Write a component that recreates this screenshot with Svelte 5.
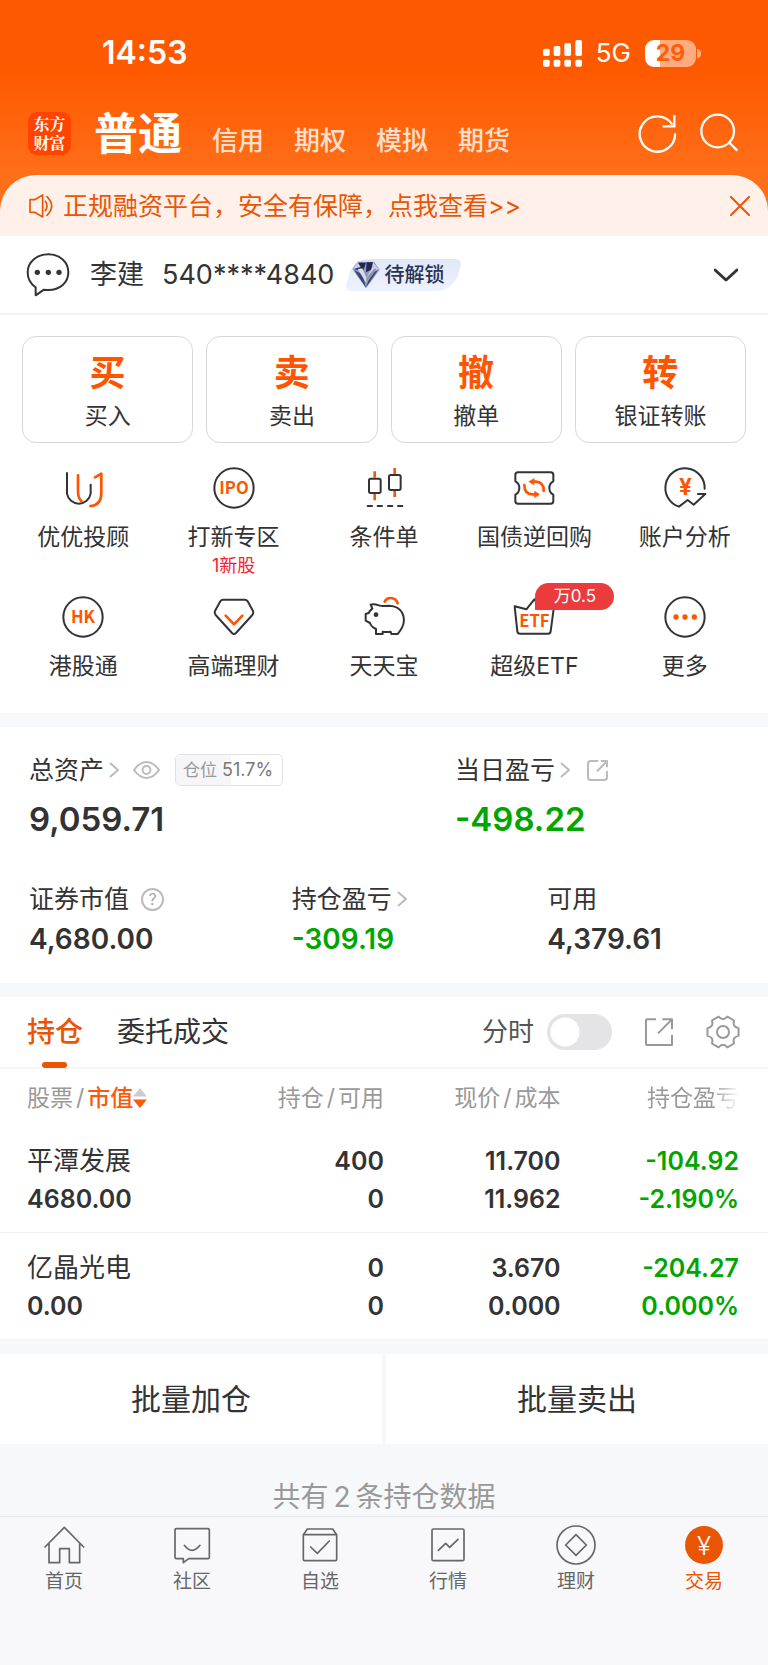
<script>
  const accountTabs = ['信用', '期权', '模拟', '期货'];
  const actions = [
    { glyph: '买', label: '买入' },
    { glyph: '卖', label: '卖出' },
    { glyph: '撤', label: '撤单' },
    { glyph: '转', label: '银证转账' }
  ];
  const tools = [
    { id: 'advisor', label: '优优投顾' },
    { id: 'ipo', label: '打新专区', note: '1新股' },
    { id: 'condition', label: '条件单' },
    { id: 'repo', label: '国债逆回购' },
    { id: 'analysis', label: '账户分析' },
    { id: 'hk', label: '港股通' },
    { id: 'wealth', label: '高端理财' },
    { id: 'piggy', label: '天天宝' },
    { id: 'etf', label: '超级ETF', badge: '万0.5' },
    { id: 'more', label: '更多' }
  ];
  const holdings = [
    { name: '平潭发展', value: '4680.00', held: '400', free: '0', price: '11.700', cost: '11.962', gain: '-104.92', rate: '-2.190%' },
    { name: '亿晶光电', value: '0.00', held: '0', free: '0', price: '3.670', cost: '0.000', gain: '-204.27', rate: '0.000%' }
  ];
  const navItems = [
    { id: 'home', label: '首页' },
    { id: 'community', label: '社区' },
    { id: 'watch', label: '自选' },
    { id: 'market', label: '行情' },
    { id: 'finance', label: '理财' },
    { id: 'trade', label: '交易', active: true }
  ];
  const position = 51.7;
  let intraday = $state(false);

  // Six-lobed gear outline: flat lobe tips joined by concave curves.
  function gearPath() {
    const pt = (deg, r) => {
      const a = (deg * Math.PI) / 180;
      return `${(Math.cos(a) * r).toFixed(1)},${(Math.sin(a) * r).toFixed(1)}`;
    };
    let d = `M${pt(-14, 48)}`;
    for (let k = 0; k < 6; k++) {
      d += ` L${pt(k * 60 + 14, 48)} Q${pt(k * 60 + 30, 31)} ${pt(k * 60 + 46, 48)}`;
    }
    return d + 'Z';
  }
  const gear = gearPath();
</script>

{#snippet chevron()}
  <svg class="chev" viewBox="0 0 10 16" aria-hidden="true"><path d="M1 1l8 7-8 7" /></svg>
{/snippet}

{#snippet toolIcon(id)}
  <svg class="tool-icon" viewBox="-66 -66 132 132" aria-hidden="true">
    {#if id === 'advisor'}
      <path d="M-48-45V17A36 36 0 0 0 23 17V-10" />
      <path class="o" d="M-15-38V10Q-15 32-4 40M36-32L55-43V14Q55 52 22 54" />
    {:else if id === 'ipo'}
      <circle r="59" /><text x="0" y="18">IPO</text>
    {:else if id === 'condition'}
      <rect x="-45" y="-28" width="35" height="43" rx="5" />
      <rect x="15" y="-39" width="35" height="45" rx="5" />
      <path d="M-49 54h13M-19 54h13M12 54h13M42 54h13" />
      <path class="o butt" d="M-28-50v19M-28 18v19M32-60v18M32 9v18" />
    {:else if id === 'repo'}
      <path d="M-48-47H50Q58-47 58-39V-20Q46-14 46 0T58 20V39Q58 47 50 47H-48Q-56 47-56 39V20Q-44 14-44 0T-56-20V-39Q-56-47-48-47Z" />
      <path class="o" d="M-4-19H6Q30-17 29 9M-29-9Q-29 19-4 19H6" />
      <path class="of" d="M-17-19L1-30V-8ZM18 19L1 8V31Z" />
    {:else if id === 'analysis'}
      <path d="M59 2A59 59 0 1 0-18 56L8 36 26 50 61 18H39" />
      <text class="yen" x="1" y="21">¥</text>
    {:else if id === 'hk'}
      <circle r="59" /><text x="0" y="19">HK</text>
    {:else if id === 'wealth'}
      <path d="M-32-52H32Q38-52 41-47L57-18Q60-12 55-6L6 48Q0 54-6 48L-55-6Q-60-12-57-18L-41-47Q-38-52-32-52Z" />
      <path class="o" d="M-25-4L0 22 25-4" />
    {:else if id === 'piggy'}
      <path d="M-40-37Q-30-40-15-35Q-8-32 0-33L16-34Q44-33 55-12Q65 10 54 32Q49 42 41 51H22L20 44Q9 46-4 44V51H-24V36Q-38 30-42 18L-55 11V-9L-46-12Q-42-20-35-25Z" />
      <path class="o" d="M2-46Q8-58 20-57Q37-56 41-41" />
      <circle class="dot" cx="-24" cy="-7" r="7" />
    {:else if id === 'etf'}
      <path d="M-58-32L-23-23 1-53 24-23 60-32 50 43Q49 50 42 50H-42Q-49 50-50 43Z" />
      <text x="1" y="31">ETF</text>
    {:else}
      <circle r="59" />
      <path class="of" d="M-35 0a8 8 0 1 0 16 0a8 8 0 1 0-16 0M-8 0a8 8 0 1 0 16 0a8 8 0 1 0-16 0M20 0a8 8 0 1 0 16 0a8 8 0 1 0-16 0" />
    {/if}
  </svg>
{/snippet}

{#snippet navIcon(id)}
  <svg class="nav-icon" viewBox="-63 -63 126 126" aria-hidden="true">
    {#if id === 'home'}
      <path d="M-57 6L1-53 59 6M-45-4V53H-13V11H16V53H47V-4" />
    {:else if id === 'community'}
      <path d="M-47-49H48Q52-49 52-45V37Q52 41 48 41H-10L-26 53V41H-47Q-51 41-51 37V-45Q-51-49-47-49ZM-23 1Q0 31 24 1" />
    {:else if id === 'watch'}
      <path d="M-50-31L-38-48H38L50-31V43Q50 47 46 47H-46Q-50 47-50 43ZM-50-31H50M-28 6L-8 25 28-12" />
    {:else if id === 'market'}
      <rect x="-48" y="-48" width="96" height="95" rx="4" />
      <path d="M-29 16L-7-5 5 7 30-17" />
    {:else if id === 'finance'}
      <circle r="57" /><path d="M0-31L31 0 0 31-31 0Z" />
    {:else}
      <circle class="coin" r="57" /><text x="0" y="29">¥</text>
    {/if}
  </svg>
{/snippet}

<div class="page">
  <header class="top">
    <div class="status">
      <span class="time">14:53</span>
      <div class="status-right">
        <svg class="signal" viewBox="0 0 117 81" aria-label="信号">
          <rect y="26" width="20" height="22" rx="5" /><rect x="32" y="18" width="20" height="30" rx="5" />
          <rect x="64" y="9" width="20" height="39" rx="5" /><rect x="97" width="20" height="48" rx="5" />
          <rect y="59" width="20" height="21" rx="5" /><rect x="32" y="59" width="20" height="21" rx="5" />
          <rect x="64" y="59" width="20" height="21" rx="5" /><rect x="97" y="59" width="20" height="21" rx="5" />
        </svg>
        <span class="net">5G</span>
        <div class="battery"><span class="cell">29</span><i></i></div>
      </div>
    </div>
    <div class="title-row">
      <div class="logo">东方财富</div>
      <nav class="account-tabs">
        <a class="current" href="#main">普通</a>
        {#each accountTabs as tab}<a href="#{tab}">{tab}</a>{/each}
      </nav>
      <div class="top-tools">
        <button aria-label="刷新">
          <svg viewBox="-63 -63 126 126"><path d="M54 1A53 53 0 1 1 46-25M52-53V-20H17" /></svg>
        </button>
        <button aria-label="搜索">
          <svg viewBox="-63 -63 126 126"><circle cx="-4" cy="-6" r="49" /><path d="M32 30L55 53" /></svg>
        </button>
      </div>
    </div>
    <div class="notice">
      <svg class="speaker" viewBox="0 0 72 72" aria-hidden="true">
        <path d="M3 17H17L41 3V69L17 55H3ZM49 22Q59 36 49 50M54 8Q82 36 54 64" />
      </svg>
      <a href="#notice">正规融资平台，安全有保障，点我查看&gt;&gt;</a>
      <button aria-label="关闭"><svg viewBox="0 0 20 20"><path d="M1 1L19 19M19 1L1 19" /></svg></button>
    </div>
  </header>

  <main>
    <section class="account">
      <svg class="chat" viewBox="0 0 132 132" aria-hidden="true">
        <path d="M29 103V127L54 110Q60 111 67 111C102 111 127 89 127 58S102 4 67 4 5 27 5 58C5 77 14 93 29 103Z" />
        <circle cx="34" cy="58" r="8" /><circle cx="67" cy="58" r="8" /><circle cx="99" cy="58" r="8" />
      </svg>
      <span class="name">李建</span>
      <span class="number">540****4840</span>
      <span class="level">
        <svg viewBox="0 0 84 84" aria-hidden="true">
          <path fill="#8c95c4" d="M17 2H66L83 26 42 82 1 24Z" />
          <path fill="#20264f" d="M20 5H42L33 30 6 24ZM44 4H63L57 26 42 34Z" />
          <path fill="#c6cdec" d="M63 4L81 26 60 26ZM17 4L26 18 3 25Z" />
          <path fill="#3c4475" d="M7 28L42 80 31 40ZM77 28L43 78 54 40Z" />
          <path fill="#dadde6" d="M17 24L31 22 43 50 60 22 73 24 43 66Z" />
          <path fill="#8f94a6" d="M43 50V66L73 24 66 23Z" />
        </svg>
        待解锁
      </span>
      <button aria-label="切换账户"><svg viewBox="0 0 24 14"><path d="M1 2L12 12 23 2" /></svg></button>
    </section>

    <section class="trade">
      <div class="actions">
        {#each actions as a}
          <button><b>{a.glyph}</b><span>{a.label}</span></button>
        {/each}
      </div>
      <div class="tools">
        {#each tools as t}
          <a href="#{t.id}">
            <span class="icon-wrap">
              {@render toolIcon(t.id)}
              {#if t.badge}<em>{t.badge}</em>{/if}
            </span>
            <span class="tool-label">{t.label}</span>
            {#if t.note}<small>{t.note}</small>{/if}
          </a>
        {/each}
      </div>
    </section>

    <section class="assets">
      <div class="major">
        <div>
          <div class="label">
            总资产 {@render chevron()}
            <button class="eye" aria-label="隐藏金额">
              <svg viewBox="0 0 82 54"><path d="M3 27Q20 3 41 3T79 27Q62 51 41 51T3 27Z" /><circle cx="41" cy="27" r="12" /></svg>
            </button>
            <span class="position"><i style="width: {position}%"></i><span>仓位</span><span class="pct">{position}%</span></span>
          </div>
          <div class="big">9,059.71</div>
        </div>
        <div>
          <div class="label">
            当日盈亏 {@render chevron()}
            <button class="share-s" aria-label="分享">
              <svg viewBox="-31 -31 62 62"><path d="M0-28H-20Q-28-28-28-20V20Q-28 28-20 28H20Q28 28 28 20V4M0 1L27-26M12-28H28V-12" /></svg>
            </button>
          </div>
          <div class="big down">-498.22</div>
        </div>
      </div>
      <div class="minor">
        <div>
          <div class="label">
            证券市值
            <button class="help" aria-label="说明">?</button>
          </div>
          <div class="mid">4,680.00</div>
        </div>
        <div>
          <div class="label">持仓盈亏 {@render chevron()}</div>
          <div class="mid down">-309.19</div>
        </div>
        <div>
          <div class="label">可用</div>
          <div class="mid">4,379.61</div>
        </div>
      </div>
    </section>

    <section class="holdings">
      <div class="bar">
        <button class="tab on">持仓</button>
        <button class="tab">委托成交</button>
        <label for="intraday">分时</label>
        <input id="intraday" type="checkbox" bind:checked={intraday} />
        <button class="bar-icon" aria-label="分享持仓">
          <svg viewBox="-51 -51 102 102"><path d="M-9-38H-36Q-39-38-39-35V35Q-39 39-36 39H39V8M-3 4L38-37M10-38H39V-8" /></svg>
        </button>
        <button class="bar-icon" aria-label="设置">
          <svg viewBox="-51 -51 102 102"><path d={gear} /><circle r="18" /></svg>
        </button>
      </div>
      <table>
        <thead>
          <tr>
            <th>
              <span class="sort">股票<i>/</i><b>市值</b>
                <svg viewBox="0 0 40 57" aria-hidden="true"><path fill="#ccc" d="M20 0L40 24H0Z" /><path fill="#fa5a0a" d="M20 57L40 33H0Z" /></svg>
              </span>
            </th>
            <th>持仓<i>/</i>可用</th>
            <th>现价<i>/</i>成本</th>
            <th><span class="fade">持仓盈亏</span></th>
          </tr>
        </thead>
        <tbody>
          {#each holdings as h}
            <tr>
              <td><span class="stock">{h.name}</span><br />{h.value}</td>
              <td>{h.held}<br />{h.free}</td>
              <td>{h.price}<br />{h.cost}</td>
              <td class="down">{h.gain}<br />{h.rate}</td>
            </tr>
          {/each}
        </tbody>
      </table>
    </section>

    <section class="batch">
      <button>批量加仓</button>
      <button>批量卖出</button>
    </section>
    <p class="count">共有<span>2</span>条持仓数据</p>
  </main>

  <nav class="bottom">
    {#each navItems as n}
      <a href="#{n.id}" class:active={n.active}>
        {@render navIcon(n.id)}
        <span>{n.label}</span>
      </a>
    {/each}
  </nav>
</div>

<style>
  :global(body) { background: #f7f8fa; }
  .page {
    font-family: Inter, "Noto Sans CJK SC", sans-serif;
    color: #333;
    font-size: 25px;
    line-height: 36px;
  }
  .page * { box-sizing: border-box; }
  button { font: inherit; color: inherit; background: none; border: 0; padding: 0; margin: 0; }
  a { color: inherit; text-decoration: none; }
  svg { display: block; fill: none; stroke-linecap: round; stroke-linejoin: round; flex: none; }
  .down { color: #00a500; }

  .top { background: linear-gradient(#ff5900 70px, #ff6f19 175px); }
  .status {
    display: flex; justify-content: space-between; align-items: center;
    padding: 34px 67px 0 102px; line-height: 38px; color: #fff;
  }
  .time { font-size: 32px; font-weight: 600; }
  .status-right { display: flex; align-items: center; gap: 14px; }
  .signal { width: 39px; height: 27px; fill: #fff; }
  .net { font-size: 26px; font-weight: 400; }
  .battery { display: flex; align-items: center; gap: 1px; }
  .cell {
    width: 51px; height: 27px; border-radius: 9px; line-height: 27px; text-align: center;
    font-size: 23px; font-weight: 700; color: #ff5e08;
    background: linear-gradient(90deg, #fff 29%, #ffac80 29%);
  }
  .battery i { width: 4px; height: 9px; border-radius: 0 5px 5px 0; background: #ffac80; }

  .title-row { display: flex; align-items: center; height: 60px; margin-top: 31px; padding: 0 28px; }
  .logo {
    width: 43px; height: 43px; padding: 2px 5px 0; border-radius: 9px; background: #ff4400; color: #fff;
    font: 700 16px/19px "Noto Serif CJK SC", "Noto Sans CJK SC", serif;
    text-align: center;
  }
  .account-tabs { display: flex; align-items: baseline; gap: 30px; margin-left: 23px; padding-top: 8px; line-height: 60px; }
  .account-tabs a { font-size: 26px; font-weight: 500; color: #ffe0cf; }
  .account-tabs a.current { font-size: 44px; font-weight: 700; color: #fff; }
  .top-tools { display: flex; gap: 20px; margin-left: auto; }
  .top-tools svg { width: 42px; height: 42px; stroke: #fff; stroke-width: 7; stroke-linecap: butt; stroke-linejoin: miter; }
  .notice {
    display: flex; align-items: center; height: 61px; margin-top: 12px; padding: 0 18px 0 29px;
    border-radius: 36px 36px 0 0; background: #fff1ea; color: #ea5504;
  }
  .notice a { margin-left: 10px; }
  .notice button { margin-left: auto; }
  .notice svg { stroke: #ea5504; }
  .speaker { width: 24px; height: 24px; stroke-width: 5; }
  .notice button svg { width: 20px; height: 20px; stroke-width: 2; }

  .account { display: flex; align-items: center; height: 79px; padding: 0 30px 0 26px; background: #fff; border-bottom: 2px solid #f2f2f3; }
  .chat { width: 44px; height: 44px; stroke: #333; stroke-width: 6; }
  .chat circle { fill: #333; stroke: none; }
  .name { font-size: 27px; margin-left: 20px; }
  .number { font-size: 27px; margin-left: 18px; }
  .level {
    position: relative; z-index: 0; display: flex; align-items: center; gap: 4px;
    height: 32px; margin-left: 11px; padding: 0 18px 0 7px;
    font-size: 20px; font-weight: 500; color: #2a3354;
  }
  .level::before {
    content: ""; position: absolute; inset: 0 4px; z-index: -1; transform: skewX(-16deg);
    border-radius: 14px 7px 16px 6px; background: linear-gradient(#e1e7f7, #eef2ff);
  }
  .level svg { width: 28px; height: 28px; }
  .account button { margin-left: auto; }
  .account button svg { width: 24px; height: 14px; stroke: #333; stroke-width: 3; }

  .trade { background: #fff; padding: 21px 0 30px; }
  .actions { display: grid; grid-template-columns: repeat(4, 1fr); gap: 13px; padding: 0 22px; }
  .actions button {
    display: flex; flex-direction: column; align-items: center;
    padding: 13px 0 7px; border: 1px solid #d8d8d8; border-radius: 14px;
  }
  .actions b { font-size: 36px; line-height: 46px; font-weight: 700; color: #ff5500; }
  .actions span { font-size: 23px; line-height: 38px; margin-top: 1px; }
  .tools { display: grid; grid-template-columns: repeat(5, 1fr); grid-template-rows: 129px 88px; padding: 23px 8px 0; }
  .tools a { display: flex; flex-direction: column; align-items: center; }
  .icon-wrap { position: relative; }
  .tool-icon { width: 44px; height: 44px; stroke: #333; stroke-width: 6; }
  .tool-icon .o { stroke: #ff5500; stroke-width: 8; }
  .tool-icon .butt { stroke-linecap: butt; }
  .tool-icon .of { fill: #ff5500; stroke: none; }
  .tool-icon .dot { fill: #333; stroke: none; }
  .tool-icon text {
    font: 700 50px "Noto Sans CJK SC", sans-serif; fill: #ff5500; text-anchor: middle; stroke: none;
  }
  .tool-icon .yen { font: 700 68px Inter, sans-serif; }
  .icon-wrap em {
    position: absolute; left: 23px; top: -12px; width: 79px; height: 27px;
    border-radius: 14px 14px 14px 0; background: #eb3b3d; color: #fff;
    font-size: 17px; font-style: normal; line-height: 27px; text-align: center;
  }
  .tool-label { font-size: 23px; line-height: 34px; margin-top: 10px; }
  .tools small { font-size: 18px; line-height: 24px; color: #f5222d; }

  .assets { margin-top: 14px; padding: 25px 29px; background: #fff; }
  .major, .minor { display: grid; }
  .major { grid-template-columns: 3fr 2fr; }
  .minor { grid-template-columns: 37fr 36fr 27fr; margin-top: 40px; }
  .label { display: flex; align-items: center; gap: 5px; height: 36px; white-space: nowrap; }
  .chev { width: 10px; height: 16px; stroke: #bbb; stroke-width: 2; stroke-linecap: butt; }
  .eye { margin-left: 9px; }
  .eye svg { width: 27px; height: 18px; stroke: #bbb; stroke-width: 6; }
  .share-s { margin-left: 12px; }
  .share-s svg { width: 21px; height: 21px; stroke: #bbb; stroke-width: 6; }
  .help {
    width: 23px; height: 23px; margin-left: 7px; border: 2px solid #bbb; border-radius: 50%;
    color: #aaa; font-size: 16px; line-height: 19px;
  }
  .position {
    position: relative; z-index: 0; display: flex; gap: 5px; margin-left: 10px; padding: 0 9px 0 7px;
    border: 1px solid #e2e2e4; border-radius: 5px; overflow: hidden;
    font-size: 17px; line-height: 30px; color: #999;
  }
  .position i { position: absolute; inset: 0 auto 0 0; z-index: -1; background: #f6f6f9; }
  .pct { font-size: 18px; color: #777; }
  .big { font-size: 33px; font-weight: 600; line-height: 44px; margin-top: 9px; }
  .mid { font-size: 28px; font-weight: 600; line-height: 38px; margin-top: 3px; }

  .holdings { margin-top: 14px; background: #fff; }
  .bar { display: flex; align-items: center; height: 72px; padding: 0 28px 0 27px; border-bottom: 2px solid #f6f6f7; }
  .tab { position: relative; height: 72px; font-size: 28px; margin-right: 34px; }
  .tab.on { color: #ea5504; font-weight: 500; }
  .tab.on::after {
    content: ""; position: absolute; left: 50%; bottom: 0; width: 25px; height: 6px; margin-left: -13px;
    border-radius: 3px; background: #ea5504;
  }
  .bar label { margin-left: auto; font-size: 26px; color: #555; }
  .bar input {
    appearance: none; width: 65px; height: 36px; margin: 0 30px 0 13px; border-radius: 18px;
    background: radial-gradient(circle 16px at 18px 18px, #fff 14px, transparent 15px) #e4e4e6;
  }
  .bar input:checked { background: radial-gradient(circle 16px at 47px 18px, #fff 14px, transparent 15px) #ea5504; }
  .bar-icon + .bar-icon { margin-left: 30px; }
  .bar-icon svg { width: 34px; height: 34px; stroke: #999; stroke-width: 6; stroke-linecap: butt; }

  table { width: 100%; table-layout: fixed; border-collapse: collapse; }
  th, td { padding: 0; text-align: right; }
  th { height: 57px; width: 23%; font-size: 23px; font-weight: 400; color: #999; white-space: nowrap; }
  th i { margin: 0 3px; font-style: normal; }
  th:first-child { width: 28%; }
  th:nth-child(2) { width: 22%; }
  th:last-child { width: 27%; }
  th:first-child, td:first-child { text-align: left; padding-left: 27px; }
  th:last-child, td:last-child { padding-right: 29px; }
  th b { font-weight: 500; color: #fa5a0a; }
  .sort { display: flex; align-items: center; }
  .sort svg { width: 14px; height: 20px; }
  .fade { mask-image: linear-gradient(90deg, #000 72%, transparent); }
  td { font-size: 25px; font-weight: 600; line-height: 38px; padding-top: 16px; padding-bottom: 14px; border-bottom: 1px solid #f2f2f4; }
  .stock { font-size: 26px; font-weight: 400; }

  .batch { display: grid; grid-template-columns: 1fr 1fr; gap: 4px; margin-top: 14px; }
  .batch button { height: 90px; background: #fff; font-size: 30px; }
  .count { margin: 0; padding-top: 34px; text-align: center; font-size: 28px; line-height: 38px; color: #999; }
  .count span { margin: 0 5px; }

  .bottom { display: grid; grid-template-columns: repeat(6, 1fr); padding: 7px 0 71px; border-top: 1px solid #e6e7ea; background: #f8f8fb; }
  .bottom a { display: flex; flex-direction: column; align-items: center; gap: 4px; font-size: 19px; line-height: 24px; color: #666; }
  .bottom .active { color: #ea5504; }
  .nav-icon { width: 42px; height: 42px; stroke: #666; stroke-width: 5; }
  .nav-icon .coin { fill: #ea5504; stroke: none; }
  .nav-icon text { font: 300 78px Inter, sans-serif; fill: #fff; stroke: none; text-anchor: middle; }
</style>
